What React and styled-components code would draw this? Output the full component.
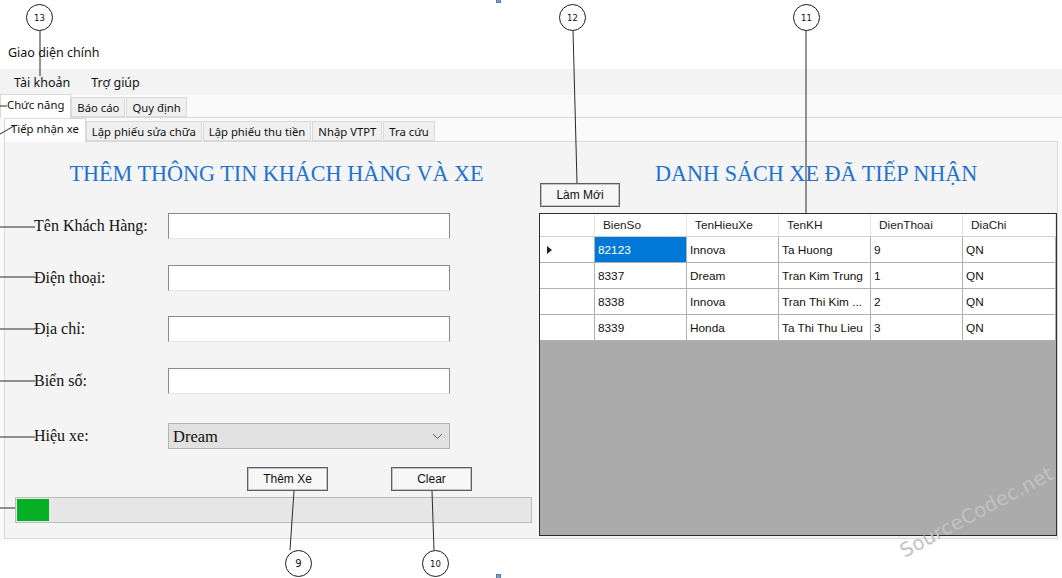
import React from 'react'
import styled, { createGlobalStyle } from 'styled-components'

const GlobalStyle = createGlobalStyle`
  html, body { margin: 0; padding: 0; background: #fff; }
  body {
    width: 1062px;
    height: 578px;
    overflow: hidden;
    font-family: "Noto Sans", "Liberation Sans", sans-serif;
    color: #111;
  }
  * { box-sizing: border-box; }
`

const Window = styled.div`
  position: relative;
  width: 1062px;
  height: 578px;
  display: flex;
  flex-direction: column;
  background: #fff;
`

const TitleBar = styled.div`
  height: 69px;
  padding: 44px 0 0 8px;
  font-size: 12.5px;
  line-height: 17px;
`

const MenuBar = styled.div`
  height: 26px;
  display: flex;
  align-items: center;
  gap: 5px;
  padding-left: 6px;
  background: #f3f3f3;
  font-size: 12.5px;
`

const MenuItem = styled.span`
  padding: 0 8px;
`

const TabStrip = styled.div`
  height: ${({ $h }) => $h}px;
  display: flex;
  align-items: flex-end;
  background: #fafafa;
  font-size: 11.3px;
`

const Tab = styled.div`
  position: relative;
  height: ${({ $active }) => ($active ? 24 : 20)}px;
  margin-bottom: ${({ $active }) => ($active ? -1 : 0)}px;
  margin-right: ${({ $active }) => ($active ? 0 : 1)}px;
  padding: ${({ $active }) => ($active ? '2px 6px 0' : '0 5px')};
  display: flex;
  align-items: ${({ $active }) => ($active ? 'flex-start' : 'center')};
  background: ${({ $active }) => ($active ? '#fff' : '#f0f0f0')};
  border: 1px solid #d9d9d9;
  border-bottom: ${({ $active }) => ($active ? 'none' : '1px solid #d9d9d9')};
  z-index: ${({ $active }) => ($active ? 2 : 1)};
  white-space: nowrap;
`

const OuterPanel = styled.div`
  height: 424px;
  border-top: 1px solid #dadada;
  background: #fafafa;
  padding: 0 4px;
  display: flex;
  flex-direction: column;
`

const InnerPanel = styled.div`
  height: 398px;
  border: 1px solid #dadada;
  background: #f4f4f4;
  display: grid;
  grid-template-columns: 531px 1fr;
`

const Column = styled.div`
  display: flex;
  flex-direction: column;
  align-items: ${({ $center }) => ($center ? 'stretch' : 'flex-start')};
`

const Heading = styled.h2`
  margin: 20px 0 0 ${({ $left }) => $left || 0}px;
  font-family: "Liberation Serif", "Times New Roman", serif;
  font-weight: normal;
  font-size: 22.2px;
  line-height: 24px;
  color: #1f72cf;
  text-align: ${({ $center }) => ($center ? 'center' : 'left')};
  white-space: nowrap;
`

const Form = styled.div`
  margin-top: 27px;
  padding-left: 29px;
  display: grid;
  grid-template-columns: 134px 282px;
  grid-auto-rows: 26px;
  row-gap: 25.7px;
  align-items: center;
`

const Label = styled.label`
  font-family: "Liberation Serif", "Times New Roman", serif;
  font-size: 16px;
  margin-top: ${({ $shift }) => $shift || 0}px;
`

const Input = styled.div`
  height: 26px;
  background: #fff;
  border: 1px solid #8a8a8a;
  border-bottom-color: #e6e6e6;
`

const Combo = styled.div`
  height: 26px;
  margin-top: ${({ $shift }) => $shift || 0}px;
  display: flex;
  align-items: center;
  justify-content: space-between;
  padding: 2px 6px 0 4px;
  background: #e1e1e1;
  border: 1px solid #b4b4b4;
  font-family: "Liberation Serif", "Times New Roman", serif;
  font-size: 16.5px;
`

const ButtonRow = styled.div`
  margin-top: 21px;
  padding-left: 242px;
  display: flex;
  gap: 63px;
`

const Button = styled.div`
  width: ${({ $w }) => $w || 81}px;
  height: 24px;
  margin: ${({ $m }) => $m || 0};
  display: flex;
  align-items: center;
  justify-content: center;
  background: #f7f7f7;
  border: 1px solid #5e5e5e;
  box-shadow: inset 0 0 0 1px #c4c4c4;
  font-family: "Liberation Sans", Arial, sans-serif;
  font-size: 12px;
`

const Progress = styled.div`
  margin: 6px 0 0 10px;
  width: 517px;
  height: 26px;
  padding: 1px;
  background: #e6e6e6;
  border: 1px solid #bcbcbc;
`

const ProgressFill = styled.div`
  height: 100%;
  background: #06b025;
`

const Grid = styled.div`
  margin: 6px 0 0 3px;
  width: 518px;
  height: 323px;
  border: 1px solid #2e2e2e;
  background: #ababab;
  display: grid;
  grid-template-columns: 55px 92px 92px 92px 92px 1fr;
  grid-template-rows: 23px repeat(4, 26px);
  align-content: start;
  font-family: "Liberation Sans", Arial, sans-serif;
  font-size: 11.8px;
`

const HeadCell = styled.div`
  display: flex;
  align-items: center;
  padding-left: 8px;
  background: #fff;
  border-right: 1px solid #e4e4e4;
  border-bottom: 1px solid #cfcfcf;
  color: #1a1a1a;
`

const RowHead = styled.div`
  display: flex;
  align-items: center;
  padding-left: 7px;
  background: #fff;
  border-right: 1px solid #b0b0b0;
  border-bottom: 1px solid #b0b0b0;
`

const Cell = styled.div`
  display: flex;
  align-items: center;
  padding-left: 3px;
  overflow: hidden;
  white-space: nowrap;
  background: ${({ $sel }) => ($sel ? '#0078d7' : '#fff')};
  color: ${({ $sel }) => ($sel ? '#fff' : '#111')};
  border-right: 1px solid #b0b0b0;
  border-bottom: 1px solid #b0b0b0;
`

const Arrow = styled.span`
  width: 0;
  height: 0;
  border-top: 4px solid transparent;
  border-bottom: 4px solid transparent;
  border-left: 5px solid #222;
`

const Overlay = styled.svg`
  position: absolute;
  inset: 0;
  pointer-events: none;
  z-index: 10;
`

const Badge = styled.div`
  position: absolute;
  left: ${({ $x }) => $x - 13}px;
  top: ${({ $y }) => $y - 13}px;
  width: 27px;
  height: 27px;
  border-radius: 50%;
  border: 1px solid #1a1a1a;
  background: #fff;
  display: flex;
  align-items: center;
  justify-content: center;
  font-family: "DejaVu Sans", sans-serif;
  font-size: ${({ $small }) => ($small ? 8.5 : 10)}px;
  z-index: 11;
`

const Marker = styled.div`
  position: absolute;
  left: 496px;
  top: ${({ $y }) => $y}px;
  width: 5px;
  height: 5px;
  background: #7d9cc4;
  border: 1px solid #5a7aa6;
  z-index: 11;
`

const Watermark = styled.div`
  position: absolute;
  left: 896px;
  top: 542px;
  transform: rotate(-28deg);
  transform-origin: left top;
  font-family: "DejaVu Sans", sans-serif;
  font-size: 19.5px;
  letter-spacing: 0.3px;
  color: #c2c2c2;
  z-index: 12;
  white-space: nowrap;
`

const rows = [
  ['82123', 'Innova', 'Ta Huong', '9', 'QN'],
  ['8337', 'Dream', 'Tran Kim Trung', '1', 'QN'],
  ['8338', 'Innova', 'Tran Thi Kim ...', '2', 'QN'],
  ['8339', 'Honda', 'Ta Thi Thu Lieu', '3', 'QN'],
]

const lines = [
  [40, 30, 40, 76],
  [573, 30, 577, 183],
  [806, 30, 806, 213],
  [294, 491, 290, 550],
  [432, 491, 434, 550],
  [0, 106, 7, 106],
  [0, 134, 14, 126],
  [0, 227, 35, 227],
  [0, 277, 35, 277],
  [0, 329, 35, 329],
  [0, 381, 35, 381],
  [0, 437, 35, 437],
  [0, 508, 15, 508],
]

export default function App() {
  return (
    <Window>
      <GlobalStyle />
      <TitleBar>Giao diện chính</TitleBar>
      <MenuBar>
        <MenuItem>Tài khoản</MenuItem>
        <MenuItem>Trợ giúp</MenuItem>
      </MenuBar>
      <TabStrip $h={22}>
        <Tab $active>Chức năng</Tab>
        <Tab>Báo cáo</Tab>
        <Tab>Quy định</Tab>
      </TabStrip>
      <OuterPanel>
        <TabStrip $h={23}>
          <Tab $active>Tiếp nhận xe</Tab>
          <Tab>Lập phiếu sửa chữa</Tab>
          <Tab>Lập phiếu thu tiền</Tab>
          <Tab>Nhập VTPT</Tab>
          <Tab>Tra cứu</Tab>
        </TabStrip>
        <InnerPanel>
          <Column $center>
            <Heading $center $left={12}>THÊM THÔNG TIN KHÁCH HÀNG VÀ XE</Heading>
            <Form>
              <Label>Tên Khách Hàng:</Label>
              <Input />
              <Label>Điện thoại:</Label>
              <Input />
              <Label>Địa chỉ:</Label>
              <Input />
              <Label>Biển số:</Label>
              <Input />
              <Label $shift={6}>Hiệu xe:</Label>
              <Combo $shift={6}>
                Dream
                <svg width="11" height="7" viewBox="0 0 11 7">
                  <polyline points="1,1 5.5,5.5 10,1" fill="none" stroke="#606060" strokeWidth="1" />
                </svg>
              </Combo>
            </Form>
            <ButtonRow>
              <Button>Thêm Xe</Button>
              <Button>Clear</Button>
            </ButtonRow>
            <Progress>
              <ProgressFill style={{ width: 32 }} />
            </Progress>
          </Column>
          <Column>
            <Heading $left={119}>DANH SÁCH XE ĐÃ TIẾP NHẬN</Heading>
            <Button $w={80} $m="-3px 0 0 4px">Làm Mới</Button>
            <Grid>
              <HeadCell />
              <HeadCell>BienSo</HeadCell>
              <HeadCell>TenHieuXe</HeadCell>
              <HeadCell>TenKH</HeadCell>
              <HeadCell>DienThoai</HeadCell>
              <HeadCell>DiaChi</HeadCell>
              {rows.map((r, i) => (
                <React.Fragment key={r[0]}>
                  <RowHead>{i === 0 && <Arrow />}</RowHead>
                  {r.map((v, j) => (
                    <Cell key={j} $sel={i === 0 && j === 0}>{v}</Cell>
                  ))}
                </React.Fragment>
              ))}
            </Grid>
          </Column>
        </InnerPanel>
      </OuterPanel>

      <Overlay width="1062" height="578">
        {lines.map(([x1, y1, x2, y2], i) => (
          <line key={i} x1={x1} y1={y1} x2={x2} y2={y2} stroke="#2a2a2a" strokeWidth="1" />
        ))}
      </Overlay>
      <Badge $x={39} $y={17} $small>13</Badge>
      <Badge $x={572} $y={17} $small>12</Badge>
      <Badge $x={806} $y={17} $small>11</Badge>
      <Badge $x={298} $y={563}>9</Badge>
      <Badge $x={435} $y={563} $small>10</Badge>
      <Marker $y={-2} />
      <Marker $y={574} />
      <Watermark>SourceCodec.net</Watermark>
    </Window>
  )
}
